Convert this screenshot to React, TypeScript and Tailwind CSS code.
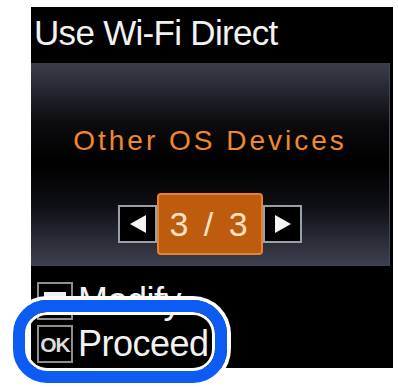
import React from "react";

const font = { fontFamily: '"Liberation Sans", Arial, sans-serif' };

const ArrowBox = ({ dir }: { dir: "left" | "right" }) => (
  <div className="w-[39px] h-[38px] border-2 border-[#9aa0aa] bg-black flex items-center justify-center">
    <svg width="18" height="20" viewBox="0 0 18 20">
      {dir === "left" ? (
        <polygon points="17,1 17,19 1,10" fill="#f4f4f4" />
      ) : (
        <polygon points="1,1 1,19 17,10" fill="#f4f4f4" />
      )}
    </svg>
  </div>
);

const KeyBox = ({
  children,
  align = "items-center",
}: {
  children?: React.ReactNode;
  align?: string;
}) => (
  <div
    className={`w-[36px] h-[38px] shrink-0 border-2 border-[#8e8e8e] flex justify-center ${align}`}
  >
    {children}
  </div>
);

export default function App() {
  return (
    <div
      className="relative w-[398px] h-[387px] bg-white overflow-hidden pl-[31px] pt-[7px]"
      style={font}
    >
      {/* LCD screen */}
      <div className="w-[362px] h-[361px] bg-black flex flex-col">
        <div className="h-[56px] pl-[3px] pt-[8px] text-[35px] leading-[35px] tracking-[-0.7px] text-[#f2f2f2]">
          Use Wi-Fi Direct
        </div>

        {/* selection panel */}
        <div className="w-[359px] h-[203px] flex flex-col items-center pt-[64px] border-r border-[#44475a] bg-[linear-gradient(to_bottom,#3b3e4b_0%,#0b0b0e_30%,#000_50%,#0e0f13_70%,#3e4150_100%)]">
          <div className="text-[28px] leading-[28px] tracking-[3px] text-[#ef8a2c]">
            Other OS Devices
          </div>
          <div className="mt-[38px] flex items-center">
            <ArrowBox dir="left" />
            <div className="w-[106px] h-[62px] rounded-[4px] bg-[#bd5c0e] border-2 border-[#e8822c] flex items-center justify-center text-[34px] leading-none tracking-[3px] text-[#fbe3c4]">
              3 / 3
            </div>
            <ArrowBox dir="right" />
          </div>
        </div>

        {/* key hints */}
        <div className="pl-[6px] pt-[16px] flex flex-col gap-[5px]">
          <div className="h-[38px] flex items-center gap-[5px]">
            <KeyBox align="items-start">
              <div className="mt-[8px] w-[22px] h-[8px] bg-[#f0f0f0]" />
            </KeyBox>
            <span className="text-[36px] leading-[38px] tracking-[-0.5px] text-[#f2f2f2]">
              Modify
            </span>
          </div>
          <div className="h-[38px] flex items-center gap-[5px]">
            <KeyBox>
              <span className="text-[21px] leading-none font-bold tracking-[-1px] text-[#dcdcdc]">
                OK
              </span>
            </KeyBox>
            <span className="text-[36px] leading-[38px] tracking-[-0.5px] text-[#f2f2f2]">
              Proceed
            </span>
          </div>
        </div>
      </div>

      {/* highlight ring */}
      <div className="absolute left-[13px] top-[300px] w-[214px] h-[83px] rounded-[34px] border-[12px] border-[#0c5cf4] shadow-[0_0_0_4px_#fff,inset_0_0_0_3px_#fff]" />
    </div>
  );
}
